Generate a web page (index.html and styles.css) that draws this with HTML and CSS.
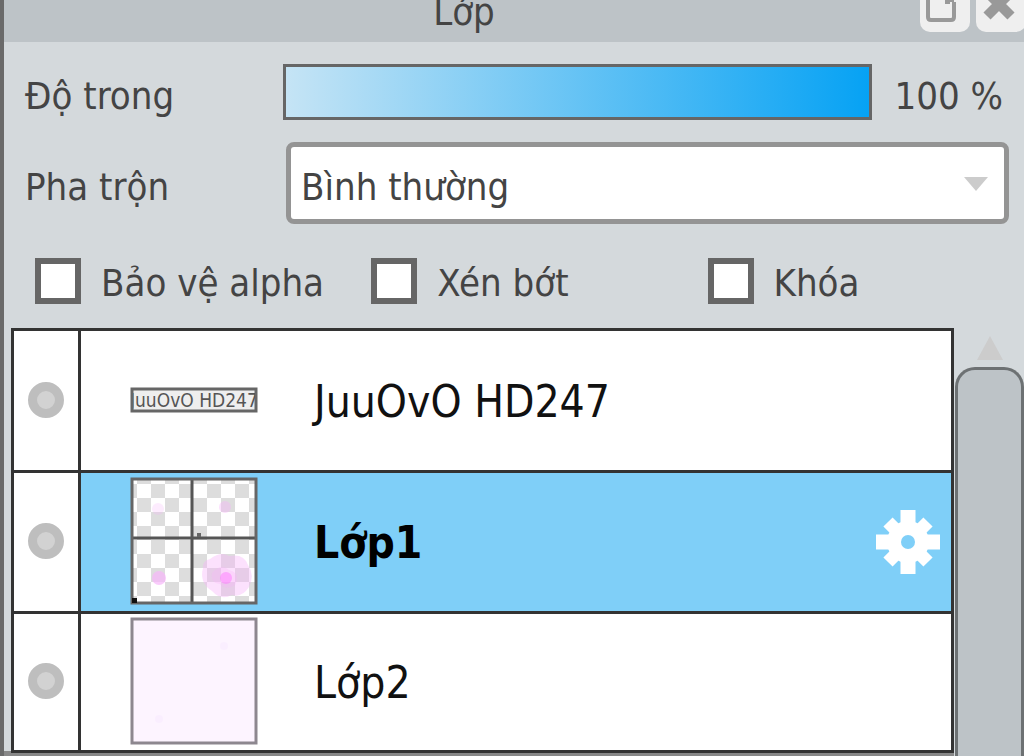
FILE: index.html
```html
<!DOCTYPE html>
<html lang="vi">
<head>
<meta charset="utf-8">
<title>Lớp</title>
<link rel="stylesheet" href="styles.css">
</head>
<body>
<main class="panel">
  <header class="titlebar">
    <h1 class="title">Lớp</h1>
    <button class="title-button" type="button" aria-label="Tách cửa sổ">
      <svg width="50" height="52" viewBox="0 0 50 52"><path d="M24 12H9Q8 12 8 14V37Q8 40 11 40H31Q34 40 34 37V22" fill="none" stroke="#999" stroke-width="4"/><path d="M23 8H34V22L30 22V24H25V20Z" fill="#999"/></svg>
    </button>
    <button class="title-button" type="button" aria-label="Đóng">
      <svg width="50" height="52" viewBox="0 0 50 52"><path d="M11 12L35 36M35 12L11 36" stroke="#999" stroke-width="10"/></svg>
    </button>
  </header>

  <section class="settings">
    <label class="caption" for="opacity">Độ trong</label>
    <div class="opacity">
      <input class="opacity-slider" id="opacity" type="range" min="0" max="100" value="100">
      <output class="opacity-value" for="opacity">100 %</output>
    </div>
    <label class="caption" for="blend">Pha trộn</label>
    <div class="blend">
      <select class="blend-select" id="blend"><option>Bình thường</option></select>
      <svg class="blend-arrow" width="24" height="14" viewBox="0 0 24 14"><path d="M0 0H24L12 14Z" fill="#ccc"/></svg>
    </div>
  </section>

  <section class="options">
    <label class="option"><input class="checkbox" type="checkbox"><span class="option-text">Bảo vệ alpha</span></label>
    <label class="option"><input class="checkbox" type="checkbox"><span class="option-text">Xén bớt</span></label>
    <label class="option"><input class="checkbox" type="checkbox"><span class="option-text">Khóa</span></label>
  </section>

  <section class="layers">
    <ul class="layer-list">
      <li class="layer">
        <button class="visibility" type="button" aria-label="Hiện JuuOvO HD247"><span class="dot"></span></button>
        <div class="layer-body">
          <svg class="thumb" width="128" height="26" viewBox="0 0 128 26">
            <rect x="2" y="2" width="124" height="22" fill="#eee" stroke="#666" stroke-width="3"/>
            <svg x="3" y="3" width="122" height="20"><text class="thumb-text" x="-3" y="17">JuuOvO HD247</text></svg>
          </svg>
          <span class="layer-name">JuuOvO HD247</span>
        </div>
      </li>
      <li class="layer selected">
        <button class="visibility" type="button" aria-label="Hiện Lớp1"><span class="dot"></span></button>
        <div class="layer-body">
          <svg class="thumb" width="128" height="128" viewBox="0 0 128 128">
            <defs>
              <pattern id="checks" x="7" y="7" width="28" height="28" patternUnits="userSpaceOnUse"><path d="M14 0h14v14H14zM0 14h14v14H0z" fill="#ddd"/></pattern>
            </defs>
            <rect x="1" y="1" width="126" height="126" fill="#fff"/>
            <rect x="1" y="1" width="126" height="126" fill="url(#checks)"/>
            <g fill="#f7b5fa" fill-opacity="0.4">
              <circle cx="28" cy="32" r="6" fill-opacity="0.25"/>
              <circle cx="95" cy="30" r="6"/>
              <circle cx="29" cy="101" r="7" fill-opacity="0.7"/>
              <path d="M80 82Q91 74 99 79Q114 76 118 88Q125 98 119 110Q112 121 102 118Q91 124 82 114Q69 106 73 91Q72 84 80 82Z"/>
              <path d="M82 96Q91 86 99 93Q111 96 105 108Q96 114 90 107Q80 106 82 96Z" fill-opacity="0.3"/>
              <circle cx="96" cy="101" r="6" fill="#ff7aff" fill-opacity="0.5"/>
            </g>
            <path d="M62 2V126M2 61H126" stroke="#555" stroke-width="3"/>
            <rect x="2" y="2" width="124" height="124" fill="none" stroke="#666" stroke-width="3"/>
            <path d="M2 121h5v5H2z" fill="#111"/><path d="M67 56h4v4h-4z" fill="#666"/>
          </svg>
          <span class="layer-name">Lớp1</span>
          <button class="gear" type="button" aria-label="Cài đặt lớp">
            <svg width="66" height="66" viewBox="0 0 66 66">
              <path d="M33 1V65M1 33H65" stroke="#fff" stroke-width="15"/>
              <path d="M13 13L53 53M53 13L13 53" stroke="#fff" stroke-width="13"/>
              <circle cx="33" cy="33" r="21" fill="#fff"/>
              <circle cx="33" cy="33" r="7" fill="#7fcff8"/>
            </svg>
          </button>
        </div>
      </li>
      <li class="layer">
        <button class="visibility" type="button" aria-label="Hiện Lớp2"><span class="dot"></span></button>
        <div class="layer-body">
          <svg class="thumb" width="128" height="128" viewBox="0 0 128 128">
            <rect x="2" y="2" width="124" height="124" fill="#fdf4ff" stroke="#8d878f" stroke-width="3"/>
            <circle cx="94" cy="29" r="4" fill="#faeeff"/><circle cx="29" cy="102" r="4" fill="#faeeff"/>
          </svg>
          <span class="layer-name">Lớp2</span>
        </div>
      </li>
    </ul>
    <div class="scrollbar">
      <svg class="scroll-up" width="26" height="24" viewBox="0 0 26 24"><path d="M13 0L26 24H0Z" fill="#ccc"/></svg>
      <div class="scroll-thumb"></div>
    </div>
  </section>
</main>
</body>
</html>
```

FILE: styles.css
```css
* {
  box-sizing: border-box;
}

body {
  margin: 0;
  background: #d4d9dc;
  color: #444;
  font-family: "DejaVu Sans Condensed", "DejaVu Sans", sans-serif;
  font-size: 38px;
  line-height: 44px;
}

button {
  padding: 0;
  border: 0;
  background: none;
}

svg {
  display: block;
}

.panel {
  display: flex;
  flex-direction: column;
  min-height: 100vh;
  border-left: 4px solid #6a6a6a;
}

.titlebar {
  display: flex;
  align-items: flex-end;
  gap: 6px;
  height: 42px;
  padding-bottom: 10px;
  padding-left: 10px;
  margin-right: -2px;
  overflow: hidden;
  background: #bdc3c7;
}

.title {
  flex: 1;
  margin: 0;
  font-size: 38px;
  font-weight: normal;
  line-height: 40px;
  text-align: center;
}

.title-button {
  border-radius: 10px;
  background: #efefef;
}

.settings {
  display: grid;
  grid-template-columns: 258px 1fr;
  align-items: center;
  row-gap: 22px;
  padding: 22px 15px 0 21px;
}

.caption,
.opacity-value {
  padding-top: 8px;
}

.opacity {
  display: flex;
  align-items: center;
  gap: 22px;
}

.opacity-slider {
  flex: 1;
  min-width: 0;
  height: 56px;
  margin: 0;
  appearance: none;
  border: 3px solid #666;
  background: linear-gradient(90deg, #c5e4f5, #06a2f4);
}

.opacity-slider::-webkit-slider-thumb {
  appearance: none;
  width: 1px;
  height: 50px;
}

.opacity-value {
  padding-right: 6px;
  white-space: nowrap;
}

.blend {
  position: relative;
  padding-left: 3px;
}

.blend-select {
  display: block;
  width: 100%;
  height: 82px;
  padding: 8px 40px 0 10px;
  appearance: none;
  border: 5px solid #949494;
  border-radius: 8px;
  background: #fff;
  color: #444;
  font: inherit;
}

.blend-arrow {
  position: absolute;
  top: 35px;
  right: 21px;
  pointer-events: none;
}

.options {
  display: grid;
  grid-template-columns: 34% 34% auto;
  padding: 33px 0 23px 31px;
}

.option {
  display: flex;
  align-items: center;
  gap: 20px;
  white-space: nowrap;
}

.option-text {
  padding-top: 4px;
}

.checkbox {
  width: 46px;
  height: 46px;
  margin: 0;
  appearance: none;
  border: 6px solid #666;
  background: #fff;
}

.layers {
  display: flex;
  flex: 1;
  padding-left: 7px;
  background: linear-gradient(#888, #888) bottom / 100% 5px no-repeat;
}

.layer-list {
  flex: 1;
  align-self: flex-start;
  margin: 0;
  padding: 0;
  border: 3px solid #333;
  background: #fff;
  color: #111;
  font-size: 44px;
  list-style: none;
}

.layer {
  display: flex;
  height: 139px;
}

.layer + .layer {
  height: 141px;
  border-top: 3px solid #333;
}

.layer:last-child {
  height: 139px;
}

.visibility {
  display: flex;
  align-items: center;
  justify-content: center;
  width: 67px;
  padding-bottom: 2px;
  border-right: 3px solid #333;
  background: #fff;
}

.dot {
  width: 36px;
  height: 36px;
  border: 9px solid #bebebe;
  border-radius: 50%;
  background: #d2d2d2;
}

.layer-body {
  display: flex;
  flex: 1;
  align-items: center;
  padding: 0 10px 0 49px;
}

.thumb {
  margin-right: 56px;
  margin-bottom: 2px;
}

.thumb-text {
  fill: #555;
  font-size: 19px;
}

.layer-name {
  flex: 1;
  padding-top: 2px;
}

.selected .layer-body {
  background: #7fcff8;
}

.selected .layer-name {
  color: #000;
  font-weight: bold;
}

.scrollbar {
  display: flex;
  flex-direction: column;
  align-items: center;
  width: 70px;
  padding: 8px 0 0 1px;
  background: #d4d9dc;
}

.scroll-thumb {
  flex: 1;
  width: 100%;
  margin-top: 7px;
  border: 3px solid #6d7173;
  border-bottom: 0;
  border-radius: 20px 20px 0 0;
  background: #bdc3c7;
}
```
